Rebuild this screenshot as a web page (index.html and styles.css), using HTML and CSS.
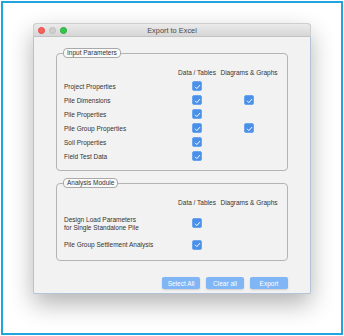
FILE: index.html
```html
<!DOCTYPE html>
<html lang="en">
<head>
  <meta charset="UTF-8" />
  <meta name="viewport" content="width=device-width, initial-scale=1.0"/>
  <title>Export to Excel</title>
  <link rel="stylesheet" href="styles.css">
</head>
<body>
  <div class="frame">
    <!-- Dialog window -->
    <div class="window">
      <div class="titlebar">
        <div class="lights">
          <span class="light red"></span>
          <span class="light gray"></span>
          <span class="light green"></span>
        </div>
        <div class="title">Export to Excel</div>
        <div></div>
      </div>
      <div class="content">
        <fieldset class="group">
          <legend>Input Parameters</legend>
          <div class="grid">
            <div></div>
            <div class="head">Data / Tables</div>
            <div class="head">Diagrams &amp; Graphs</div>

            <div class="label">Project Properties</div>
            <div class="cell"><span class="check"></span></div>
            <div class="cell"></div>

            <div class="label">Pile Dimensions</div>
            <div class="cell"><span class="check"></span></div>
            <div class="cell"><span class="check"></span></div>

            <div class="label">Pile Properties</div>
            <div class="cell"><span class="check"></span></div>
            <div class="cell"></div>

            <div class="label">Pile Group Properties</div>
            <div class="cell"><span class="check"></span></div>
            <div class="cell"><span class="check"></span></div>

            <div class="label">Soil Properties</div>
            <div class="cell"><span class="check"></span></div>
            <div class="cell"></div>

            <div class="label">Field Test Data</div>
            <div class="cell"><span class="check"></span></div>
            <div class="cell"></div>
          </div>
        </fieldset>

        <fieldset class="group analysis">
          <legend>Analysis Module</legend>
          <div class="grid">
            <div></div>
            <div class="head">Data / Tables</div>
            <div class="head">Diagrams &amp; Graphs</div>

            <div class="label tall">Design Load Parameters<br>for Single Standalone Pile</div>
            <div class="cell"><span class="check"></span></div>
            <div class="cell"></div>

            <div class="label">Pile Group Settlement Analysis</div>
            <div class="cell"><span class="check"></span></div>
            <div class="cell"></div>
          </div>
        </fieldset>

        <div class="buttons">
          <button class="btn">Select All</button>
          <button class="btn">Clear all</button>
          <button class="btn">Export</button>
        </div>
      </div>
    </div>
  </div>
  <script>
    // Checkmark icon in every checked box
    document.querySelectorAll('.check').forEach(function(box) {
      box.innerHTML = '<svg width="10" height="10" viewBox="0 0 10 10"><path d="M2.6 5.1 L4.3 6.8 L7.5 3.2" fill="none" stroke="#fff" stroke-width="1.1" stroke-linecap="round" stroke-linejoin="round"/></svg>';
    });
  </script>
</body>
</html>
```

FILE: styles.css
```css
body {
  margin: 0;
  background: #fff;
  font-family: 'Liberation Sans', Arial, sans-serif;
}
.frame {
  width: 342px;
  height: 334px;
  margin: 1px;
  box-sizing: border-box;
  border: 2px solid #22a5de;
  padding: 20px 0 0 30px;
  overflow: hidden;
}
.window {
  width: 278px;
  box-sizing: border-box;
  background: #f2f2f2;
  border: 1px solid #b3c4da;
  border-top: none;
  border-radius: 4px 4px 2px 2px;
  box-shadow: 0 10px 24px rgba(0,0,0,0.3);
}
.titlebar {
  height: 14px;
  display: grid;
  grid-template-columns: 1fr auto 1fr;
  align-items: center;
  background: linear-gradient(#ebebeb, #d6d6d6);
  border: 1px solid #cfcfcf;
  border-bottom: 1px solid #c2c2c2;
  margin: 0 -1px;
  box-sizing: border-box;
  border-radius: 4px 4px 0 0;
}
.lights {
  display: flex;
  gap: 4px;
  padding-left: 4px;
}
.light {
  width: 7px;
  height: 7px;
  border-radius: 50%;
  box-sizing: border-box;
}
.light.red {
  background: #fc605b;
  border: 0.5px solid #de4a45;
}
.light.gray {
  background: #d0d0d0;
  border: 0.5px solid #bdbdbd;
}
.light.green {
  background: #34c84a;
  border: 0.5px solid #27a83a;
}
.title {
  font-size: 7.4px;
  color: #4a4a4a;
}
.content {
  padding: 11px 22px 4px 22px;
}
.group {
  margin: 0;
  padding: 7px 8px 7px 7px;
  border: 1px solid #b4b4b4;
  border-radius: 4px;
  min-inline-size: 0;
}
.group legend {
  padding: 0 3px;
  margin-left: -1px;
  font-size: 6.5px;
  line-height: 8px;
  color: #333;
  border: 1px solid #a9a9a9;
  border-radius: 4px;
  background: #fafafa;
}
.analysis {
  margin-top: 7px;
  padding-bottom: 8px;
}
.grid {
  display: grid;
  grid-template-columns: 1fr 44px 60px;
  grid-auto-rows: 14px;
  align-items: center;
  font-size: 6.5px;
  color: #333;
}
.analysis .grid {
  grid-template-rows: 14px 28px 15px;
}
.head {
  text-align: center;
  white-space: nowrap;
}
.label {
  white-space: nowrap;
}
.label.tall {
  line-height: 8.3px;
  padding-top: 2px;
}
.cell {
  display: flex;
  justify-content: center;
  align-items: center;
}
.check {
  width: 10px;
  height: 10px;
  box-sizing: border-box;
  background: #4a90e8;
  border: 0.5px solid #6aa6ef;
  border-radius: 2px;
  display: flex;
}
.check svg {
  display: block;
  margin: -0.5px;
}
.buttons {
  display: flex;
  justify-content: flex-end;
  gap: 6px;
  margin-top: 16px;
}
.btn {
  width: 38px;
  height: 12px;
  padding: 0;
  border: none;
  border-radius: 2px;
  background: #80b5f6;
  color: #fff;
  font-family: 'Liberation Sans', Arial, sans-serif;
  font-size: 6.5px;
  box-shadow: 0 1px 2px rgba(0,0,0,0.15);
  cursor: pointer;
}
```
